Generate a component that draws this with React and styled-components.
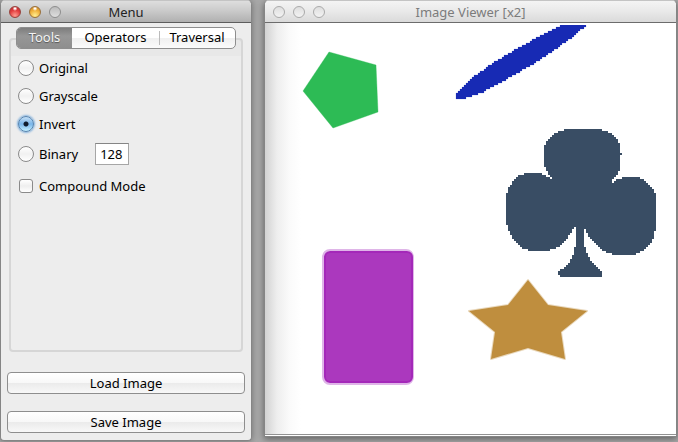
import React, { useState } from "react";
import styled, { createGlobalStyle, css } from "styled-components";

const GlobalStyle = createGlobalStyle`
  * { box-sizing: border-box; }
  html, body, #root { height: 100%; }
  body {
    margin: 0;
    overflow: hidden;
    background: #a9a9a9;
    color: #000;
    font: 13px/16px "Noto Sans", "Open Sans", sans-serif;
  }
  button, input { font: inherit; color: inherit; margin: 0; }
`;

const Desktop = styled.main`
  display: flex;
  gap: 12px;
  height: 100%;
  padding: 0 1px 0 0;
`;

const Window = styled.section`
  display: flex;
  flex-direction: column;
  min-width: 0;
  border: 1px solid #858585;
  border-top-color: #c4c4c4;
`;

const MenuWindow = styled(Window)`
  flex: 0 0 252px;
  margin-bottom: 1px;
  border-radius: 5px 5px 4px 4px;
  background: #ededed;
  box-shadow: 0 0 7px rgba(0, 0, 0, 0.35);
`;

const ViewerWindow = styled(Window)`
  flex: 1;
  margin-bottom: 5px;
  border-radius: 5px 5px 0 0;
  background: #fff;
  box-shadow: 0 2px 7px rgba(0, 0, 0, 0.45);
`;

const TitleBar = styled.header`
  display: grid;
  grid-template-columns: 60px 1fr 60px;
  align-items: center;
  flex: none;
  height: 22px;
  padding: 0 8px;
  border-bottom: 1px solid ${(p) => (p.$active ? "#5d5d5d" : "#6c6c6c")};
  border-radius: 4px 4px 0 0;
  background: ${(p) =>
    p.$active
      ? "linear-gradient(#dedede, #cbcbcb 45%, #b0b0b0)"
      : "linear-gradient(#f4f4f4, #e9e9e9 50%, #dadada)"};
  color: ${(p) => (p.$active ? "#222" : "#7c7c7c")};
`;

const Title = styled.h1`
  margin: 0;
  font: inherit;
  text-align: center;
  white-space: nowrap;
`;

const Lights = styled.div`
  display: flex;
  gap: 8px;
`;

const lightColors = {
  red: css`
    border-color: #98423d;
    background: radial-gradient(circle at 50% 15%, #fff 5%, transparent 25%),
      radial-gradient(circle at 50% 85%, #ff9d91, #e23d3e 55%, #b52a2c);
  `,
  amber: css`
    border-color: #99703a;
    background: radial-gradient(circle at 50% 15%, #fff 5%, transparent 25%),
      radial-gradient(circle at 50% 85%, #ffef91, #efb03b 55%, #c37c20);
  `,
  gray: css`
    border-color: #8d8d8d;
    background: linear-gradient(#bcbcbc, #dedede);
  `,
  clear: css`
    border-color: #aaa;
    background: linear-gradient(#dedede, #f3f3f3);
  `,
};

const Light = styled.button`
  width: 12px;
  height: 12px;
  padding: 0;
  border: 1px solid;
  border-radius: 50%;
  ${(p) => lightColors[p.$tone]}
`;

const MenuBody = styled.div`
  display: flex;
  flex: 1;
  flex-direction: column;
  padding: 4px 6px 7px;
`;

const Tabs = styled.div`
  z-index: 1;
  display: flex;
  align-self: center;
  height: 22px;
  margin-bottom: -11px;
  border: 1px solid #8e8e8e;
  border-radius: 5px;
  background: linear-gradient(#fff, #fff 50%, #f0f0f0 52%, #fbfbfb);
  overflow: hidden;
`;

const Tab = styled.button`
  display: flex;
  align-items: center;
  justify-content: center;
  width: ${(p) => p.$width}px;
  padding: 0 0 2px;
  border: 0;
  background: transparent;

  &:last-child {
    background: linear-gradient(#bbb, #bbb) 0 50% / 1px 14px no-repeat;
  }

  &[aria-selected="true"] {
    background: linear-gradient(#7d7d7d, #979797 40%, #8e8e8e);
    color: #f4f4f4;
    text-shadow: 0 1px 1px #555;
  }
`;

const GroupBox = styled.div`
  flex: 1;
  margin: 0 2px;
  padding: 14px 7px;
  border: 2px solid #d6d6d6;
  border-radius: 4px;
  background: linear-gradient(#e8e8e8 16px, #ededed 16px);
`;

const Row = styled.div`
  display: flex;
  align-items: center;
  height: ${(p) => (p.$tall ? 32 : 28)}px;
`;

const Choice = styled.label`
  display: flex;
  align-items: center;
  gap: 5px;
`;

const Radio = styled.input.attrs({ type: "radio", name: "tool" })`
  appearance: none;
  width: 16px;
  height: 16px;
  border: 1px solid #8a8a8a;
  border-radius: 50%;
  background: linear-gradient(#fff, #f1f1f1 50%, #fff);

  &:checked {
    border-color: #5684b0;
    background: radial-gradient(circle, #101c2c 2px, transparent 3px),
      linear-gradient(#c5dff5, #79b5e9 50%, #c3efff);
    box-shadow: 0 0 2px 1px #80b0dd;
  }
`;

const Checkbox = styled.input.attrs({ type: "checkbox" })`
  appearance: none;
  width: 14px;
  height: 14px;
  margin: 0 1px;
  border: 1px solid #8a8a8a;
  border-radius: 3px;
  background: linear-gradient(#fff, #eee 50%, #fff);

  &:checked {
    background: #79b5e9;
  }
`;

const Threshold = styled.input`
  width: 34px;
  height: 22px;
  margin-left: 17px;
  padding: 0 4px;
  border: 1px solid #a6a6a6;
  border-top-color: #858585;
  background: #fff;
`;

const Actions = styled.div`
  display: grid;
  gap: 17px;
  margin-top: 20px;
`;

const PushButton = styled.button`
  height: 22px;
  padding: 0;
  border: 1px solid #8e8e8e;
  border-radius: 4px;
  background: linear-gradient(#fff, #f8f8f8 48%, #ebebeb 52%, #f8f8f8);
`;

const Canvas = styled.div`
  flex: 1;
  min-height: 0;
  padding-top: 2px;
  border-bottom: 1px solid #fff;
  background: linear-gradient(90deg, #d2d2d2, #eee 12px, #fafafa 24px, #fff 36px);
  box-shadow: inset 0 -1px #929292;
  overflow: hidden;
`;

const Drawing = styled.svg`
  display: block;
`;

// Fills a polygon with horizontal runs of 2px cells, as a doubled bitmap shows it.
function cellPath(points) {
  const ys = points.map((p) => p[1]);
  let d = "";
  const top = Math.floor(Math.min(...ys) / 2) * 2 - 1;
  for (let y = top; y < Math.max(...ys); y += 2) {
    const hits = [];
    points.forEach(([x1, y1], i) => {
      const [x2, y2] = points[(i + 1) % points.length];
      const mid = y + 1;
      if (y1 <= mid !== y2 <= mid) {
        hits.push(x1 + ((mid - y1) / (y2 - y1)) * (x2 - x1));
      }
    });
    hits.sort((a, b) => a - b);
    for (let i = 0; i + 1 < hits.length; i += 2) {
      const a = Math.round(hits[i] / 2) * 2;
      const b = Math.round(hits[i + 1] / 2) * 2;
      if (b > a) d += `M${a} ${y}H${b}V${y + 2}H${a}Z`;
    }
  }
  return d;
}

const club = cellPath([
  [566, 129], [600, 129], [608, 132], [614, 136], [618, 141], [620, 146],
  [620, 152], [622, 153], [622, 155], [620, 156],
  [620, 168], [617, 174], [612, 180], [612, 183], [618, 179], [626, 177],
  [638, 177], [646, 181], [652, 188], [655, 194], [656, 199], [656, 226],
  [654, 236], [650, 244], [644, 250], [634, 255], [614, 255], [605, 252],
  [596, 245], [590, 238], [585, 229], [584, 226], [584, 243], [587, 253],
  [591, 261], [597, 267], [602, 271], [602, 277], [562, 277], [558, 275],
  [558, 271], [564, 268], [570, 262], [573, 255], [576, 243], [576, 225],
  [574, 227], [571, 233], [566, 240], [560, 246], [548, 251], [530, 251],
  [522, 248], [514, 240], [508, 229], [506, 223], [506, 195], [509, 187],
  [514, 180], [520, 175], [526, 173], [540, 173], [549, 177], [552, 179],
  [547, 172], [544, 166], [544, 147], [548, 139], [555, 133],
]);

const blade = cellPath([
  [562, 25], [540, 36], [520, 47], [493, 63], [473, 77], [462, 87], [456, 94],
  [455, 98], [458, 99], [464, 99], [472, 96], [483, 92], [507, 79], [530, 66],
  [550, 53], [570, 39], [587, 25],
]);

function Shapes() {
  return (
    <Drawing width="410" height="410" viewBox="265 25 410 410" role="img" aria-label="Inverted shapes">
      <g strokeLinejoin="round">
        <polygon points="329,52 376,65 378,112 333,128 303,91" fill="#2dbb55" stroke="#2dbb55" strokeOpacity="0.35" />
        <path d={blade} fill="none" stroke="#172ab4" strokeOpacity="0.15" />
        <path d={blade} fill="#172ab4" shapeRendering="crispEdges" />
        <path d={club} fill="#394d64" shapeRendering="crispEdges" />
        <rect x="323" y="250" width="90" height="134" rx="7" fill="none" stroke="#dfb5e8" strokeWidth="2" />
        <rect x="325" y="252" width="87" height="130" rx="5" fill="#ab38be" stroke="#a428b9" strokeWidth="2" />
        <polygon
          points="528,280 548,305 587,311 561,332 565,359 528,348 491,359 495,332 469,311 508,305"
          fill="#bf8e3e"
          stroke="#bf8e3e"
          strokeOpacity="0.35"
          strokeWidth="2"
        />
      </g>
    </Drawing>
  );
}

function WindowBar({ title, active, tones }) {
  return (
    <TitleBar $active={active}>
      <Lights>
        {["Close", "Minimize", "Zoom"].map((name, i) => (
          <Light key={name} $tone={tones[i]} aria-label={name} />
        ))}
      </Lights>
      <Title>{title}</Title>
    </TitleBar>
  );
}

const tabs = [
  { name: "Tools", width: 55 },
  { name: "Operators", width: 87 },
  { name: "Traversal", width: 76 },
];

export default function App() {
  const [tab, setTab] = useState("Tools");
  const [tool, setTool] = useState("Invert");
  const radio = (name) => (
    <Choice>
      <Radio value={name} checked={tool === name} onChange={() => setTool(name)} />
      {name}
    </Choice>
  );

  return (
    <>
      <GlobalStyle />
      <Desktop>
        <MenuWindow>
          <WindowBar title="Menu" active tones={["red", "amber", "gray"]} />
          <MenuBody>
            <Tabs role="tablist">
              {tabs.map(({ name, width }) => (
                <Tab key={name} role="tab" $width={width} aria-selected={tab === name} onClick={() => setTab(name)}>
                  {name}
                </Tab>
              ))}
            </Tabs>
            <GroupBox>
              <Row>{radio("Original")}</Row>
              <Row>{radio("Grayscale")}</Row>
              <Row>{radio("Invert")}</Row>
              <Row $tall>
                {radio("Binary")}
                <Threshold aria-label="Binary threshold" defaultValue="128" />
              </Row>
              <Row $tall>
                <Choice>
                  <Checkbox />
                  Compound Mode
                </Choice>
              </Row>
            </GroupBox>
            <Actions>
              <PushButton>Load Image</PushButton>
              <PushButton>Save Image</PushButton>
            </Actions>
          </MenuBody>
        </MenuWindow>
        <ViewerWindow>
          <WindowBar title="Image Viewer [x2]" tones={["clear", "clear", "clear"]} />
          <Canvas>
            <Shapes />
          </Canvas>
        </ViewerWindow>
      </Desktop>
    </>
  );
}
